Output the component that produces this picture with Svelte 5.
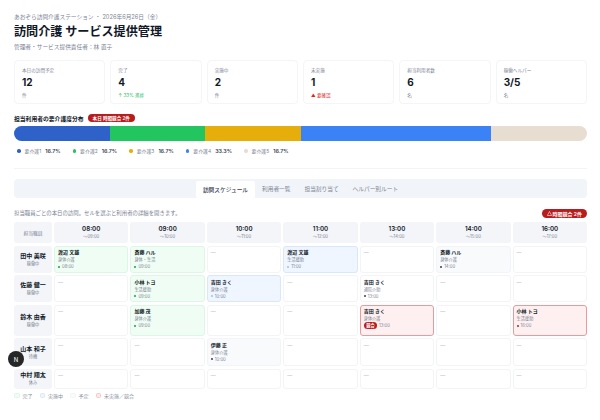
<script>
  const kpis = [
    { label: '本日の訪問予定', value: '12', note: '件' },
    { label: '完了', value: '4', note: '↑ 33% 進捗', tone: 'up' },
    { label: '実施中', value: '2', note: '件' },
    { label: '未実施', value: '1', note: '▲ 要確認', tone: 'down' },
    { label: '担当利用者数', value: '6', note: '名' },
    { label: '稼働ヘルパー', value: '3/5', note: '名' }
  ];
  const levels = [
    { name: '要介護1', pct: 16.7, color: '#2f62c8' },
    { name: '要介護2', pct: 16.7, color: '#22c55e' },
    { name: '要介護3', pct: 16.7, color: '#e6ae0a' },
    { name: '要介護4', pct: 33.3, color: '#3b82f6' },
    { name: '要介護5', pct: 16.7, color: '#e7ddd0' }
  ];
  const tabs = ['訪問スケジュール', '利用者一覧', '担当割り当て', 'ヘルパー別ルート'];
  const slots = ['08:00', '09:00', '10:00', '11:00', '13:00', '14:00', '16:00'];
  const ends = ['09:00', '10:00', '11:00', '12:00', '14:00', '15:00', '17:00'];
  const c = (name, kind, time, state, clash = false) => ({ name, kind, time, state, clash });
  const rows = [
    { name: '田中 美咲', status: '稼働中', cells: [c('渡辺 文雄', '身体介護', '08:00', 'done'), c('斎藤 ハル', '身体・生活', '09:00', 'done'), null, c('渡辺 文雄', '生活援助', '11:00', 'active'), null, c('斎藤 ハル', '身体介護', '14:00', 'plan'), null] },
    { name: '佐藤 健一', status: '稼働中', cells: [null, c('小林 トヨ', '生活援助', '09:00', 'done'), c('吉田 きく', '身体介護', '10:00', 'active'), null, c('吉田 きく', '通院介助', '13:00', 'plain'), null, null] },
    { name: '鈴木 由香', status: '稼働中', cells: [null, c('加藤 茂', '身体介護', '09:00', 'done'), null, null, c('吉田 きく', '身体介護', '13:00', 'alert', true), null, c('小林 トヨ', '生活援助', '16:00', 'alert')] },
    { name: '山本 和子', status: '待機', cells: [null, null, c('伊藤 正', '身体介護', '10:00', 'plan'), null, null, null, null] },
    { name: '中村 翔太', status: '休み', cells: [null, null, null, null, null, null, null] }
  ];
  const legend = [
    { label: '完了', cls: 'done' },
    { label: '実施中', cls: 'active' },
    { label: '予定', cls: 'plan' },
    { label: '未実施／競合', cls: 'miss' }
  ];
</script>

<main>
  <header>
    <p class="crumb">あおぞら訪問介護ステーション ・ 2026年6月26日（金）</p>
    <h1>訪問介護 サービス提供管理</h1>
    <p class="crumb">管理者・サービス提供責任者：林 直子</p>
  </header>

  <section class="kpis">
    {#each kpis as k}
      <div class="kpi">
        <span class="kpi-label">{k.label}</span>
        <strong>{k.value}</strong>
        <span class="kpi-note {k.tone ?? ''}">{k.note}</span>
      </div>
    {/each}
  </section>

  <section class="dist">
    <div class="dist-head">
      <h2>担当利用者の要介護度分布</h2>
      <span class="pill">本日 時間競合 2件</span>
    </div>
    <div class="bar">
      {#each levels as l}
        <div style="flex: {l.pct}; background: {l.color}"></div>
      {/each}
    </div>
    <div class="levels">
      {#each levels as l}
        <span class="level">
          <i style="background: {l.color}"></i><span>{l.name}</span><b>{l.pct}%</b>
        </span>
      {/each}
    </div>
  </section>

  <nav class="tabs">
    {#each tabs as t, i}
      <span class="tab" class:on={i === 0}>{t}</span>
    {/each}
  </nav>

  <div class="intro">
    <p>担当職員ごとの本日の訪問。セルを選ぶと利用者の詳細を開きます。</p>
    <span class="pill">
      <svg viewBox="0 0 10 10" width="5" height="5"><path d="M5 1 9.4 9H.6Z" fill="none" stroke="#fff" stroke-width="1.1" stroke-linejoin="round" /></svg>
      時間競合 2件
    </span>
  </div>

  <div class="grid">
    <div class="head staff-head">担当職員</div>
    {#each slots as s, i}
      <div class="head"><b>{s}</b><span>〜{ends[i]}</span></div>
    {/each}
    {#each rows as r}
      <div class="staff"><b>{r.name}</b><span>{r.status}</span></div>
      {#each r.cells as cell}
        {#if cell}
          <div class="cell {cell.state}">
            <b>{cell.name}</b>
            <span class="kind">{cell.kind}</span>
            <span class="time">
              {#if cell.clash}<em>競合</em>{:else}<i></i>{/if}{cell.time}
            </span>
          </div>
        {:else}
          <div class="cell empty">—</div>
        {/if}
      {/each}
    {/each}
  </div>

  <div class="key">
    {#each legend as l}
      <span class="key-item"><i class={l.cls}></i>{l.label}</span>
    {/each}
  </div>

  <button class="fab">N</button>
</main>

<style>
  :global(body) {
    margin: 0;
    background: #fff;
    font-family: Inter, "Noto Sans CJK JP", sans-serif;
    color: #111827;
  }
  main {
    width: 573px;
    height: 407px;
    padding: 13px 13px 0 14px;
    overflow: hidden;
    position: relative;
  }
  p { margin: 0; }
  header { height: 47px; }
  .crumb {
    font-size: 5.7px;
    line-height: 8px;
    color: #7b8494;
  }
  h1 {
    margin: 2px 0 3px;
    font-size: 12.1px;
    line-height: 17px;
    font-weight: 700;
  }
  .kpis {
    display: grid;
    grid-template-columns: repeat(6, 1fr);
    gap: 5px;
  }
  .kpi {
    height: 44px;
    box-sizing: border-box;
    padding: 6px 7px;
    border: 1px solid #f4f5f7;
    border-radius: 4px;
    display: flex;
    flex-direction: column;
  }
  .kpi-label { font-size: 4.6px; line-height: 7px; color: #7b8494; }
  .kpi strong { font-size: 10px; line-height: 13px; margin-top: 2px; font-weight: 700; }
  .kpi-note { font-size: 4.6px; line-height: 7px; margin-top: 3px; color: #7b8494; }
  .kpi-note.up { color: #22c55e; }
  .kpi-note.down { color: #dc2626; }
  .dist { margin-top: 9px; }
  .dist-head { display: flex; align-items: center; gap: 4px; height: 10px; }
  h2 { margin: 0; font-size: 5.8px; font-weight: 700; }
  .pill {
    display: inline-flex;
    align-items: center;
    gap: 1px;
    padding: 0 5px;
    height: 8px;
    border-radius: 4px;
    background: #b91c1c;
    color: #fff;
    font-size: 4.6px;
    font-weight: 600;
  }
  .intro .pill { height: 9px; font-size: 5px; border-radius: 4.5px; }
  .bar {
    display: flex;
    height: 15px;
    margin-top: 3px;
    border-radius: 7.5px;
    overflow: hidden;
  }
  .levels {
    display: flex;
    gap: 12px;
    padding: 0 3px 13px;
    margin-top: 6px;
    height: 8px;
    align-items: center;
    border-bottom: 1px solid #f3f4f6;
  }
  .level { display: inline-flex; align-items: center; line-height: 8px; font-size: 4.9px; color: #7b8494; }
  .level i { width: 3.5px; height: 3.5px; border-radius: 50%; margin-right: 4px; }
  .level b { margin-left: 4px; font-size: 5.3px; color: #374151; font-weight: 600; }
  .tabs {
    display: flex;
    justify-content: center;
    margin-top: 10px;
    height: 19px;
    border-radius: 4px;
    background: #f1f5f9;
  }
  .tab {
    display: flex;
    align-items: center;
    padding: 0 7px;
    font-size: 5.7px;
    color: #7b8494;
  }
  .tab.on {
    margin-top: 2px;
    background: #fff;
    color: #374151;
    font-weight: 500;
    border-radius: 2px;
  }
  .intro {
    display: flex;
    justify-content: space-between;
    align-items: center;
    margin-top: 10px;
    height: 10px;
    font-size: 5.4px;
    color: #7b8494;
  }
  .grid {
    display: grid;
    grid-template-columns: 38px repeat(7, 1fr);
    grid-template-rows: 21px 27px 27px 31px 28px 20px;
    gap: 2.5px 2px;
    margin-top: 4px;
  }
  .head, .staff {
    display: flex;
    flex-direction: column;
    align-items: center;
    justify-content: center;
    border-radius: 3px;
    background: #f3f5f8;
  }
  .head b { font-size: 6.2px; line-height: 8px; font-weight: 600; }
  .head span { font-size: 4.2px; line-height: 7px; color: #7b8494; }
  .staff-head { font-size: 4.8px; color: #7b8494; }
  .staff b { font-size: 6px; line-height: 8px; font-weight: 700; }
  .staff span { font-size: 4.2px; line-height: 7px; color: #7b8494; }
  .cell {
    box-sizing: border-box;
    border: 1px solid #f3f4f7;
    border-radius: 3px;
    padding: 2.5px 3px;
    display: flex;
    flex-direction: column;
    background: #fff;
  }
  .cell b { font-size: 5px; line-height: 7px; font-weight: 700; }
  .kind { font-size: 4.2px; line-height: 7px; color: #7b8494; }
  .time { font-size: 4.2px; line-height: 7px; color: #7b8494; display: flex; align-items: center; }
  .time i { width: 2px; height: 2px; border-radius: 50%; background: currentColor; margin-right: 2px; }
  .time em {
    font-style: normal;
    background: #b91c1c;
    color: #fff;
    border-radius: 3.5px;
    padding: 0 2.5px;
    margin-right: 2px;
    font-weight: 600;
  }
  .empty { font-size: 5px; line-height: 7px; color: #a8aeb8; }
  .done { background: #f0fdf4; border-color: #dcf7e5; }
  .done .time i { background: #16a34a; }
  .active { background: #eff6ff; border-color: #d9e6fb; }
  .active .time i { background: #93c5fd; }
  .plan { background: #f8fafc; border-color: #f1f5f9; }
  .plan .time i { background: #374151; }
  .plain .time i { background: #374151; }
  .alert { background: #fef0f0; border-color: #eb9a9a; }
  .alert .time i { background: #b91c1c; }
  .miss { background: #fde8e8; border-color: #f8c8c8; }
  .key {
    display: flex;
    gap: 7px;
    margin-top: 3px;
    height: 8px;
    font-size: 5px;
    color: #8a93a1;
  }
  .key-item { display: inline-flex; align-items: center; gap: 3px; }
  .key-item i {
    width: 3.5px;
    height: 3.5px;
    border-width: 1px;
    border-style: solid;
    border-radius: 1.5px;
  }
  .fab {
    position: absolute;
    left: 8px;
    top: 351px;
    width: 16px;
    height: 16px;
    padding: 0;
    border: none;
    border-radius: 50%;
    background: #262626;
    color: #fff;
    font-family: inherit;
    font-size: 6px;
  }
</style>
